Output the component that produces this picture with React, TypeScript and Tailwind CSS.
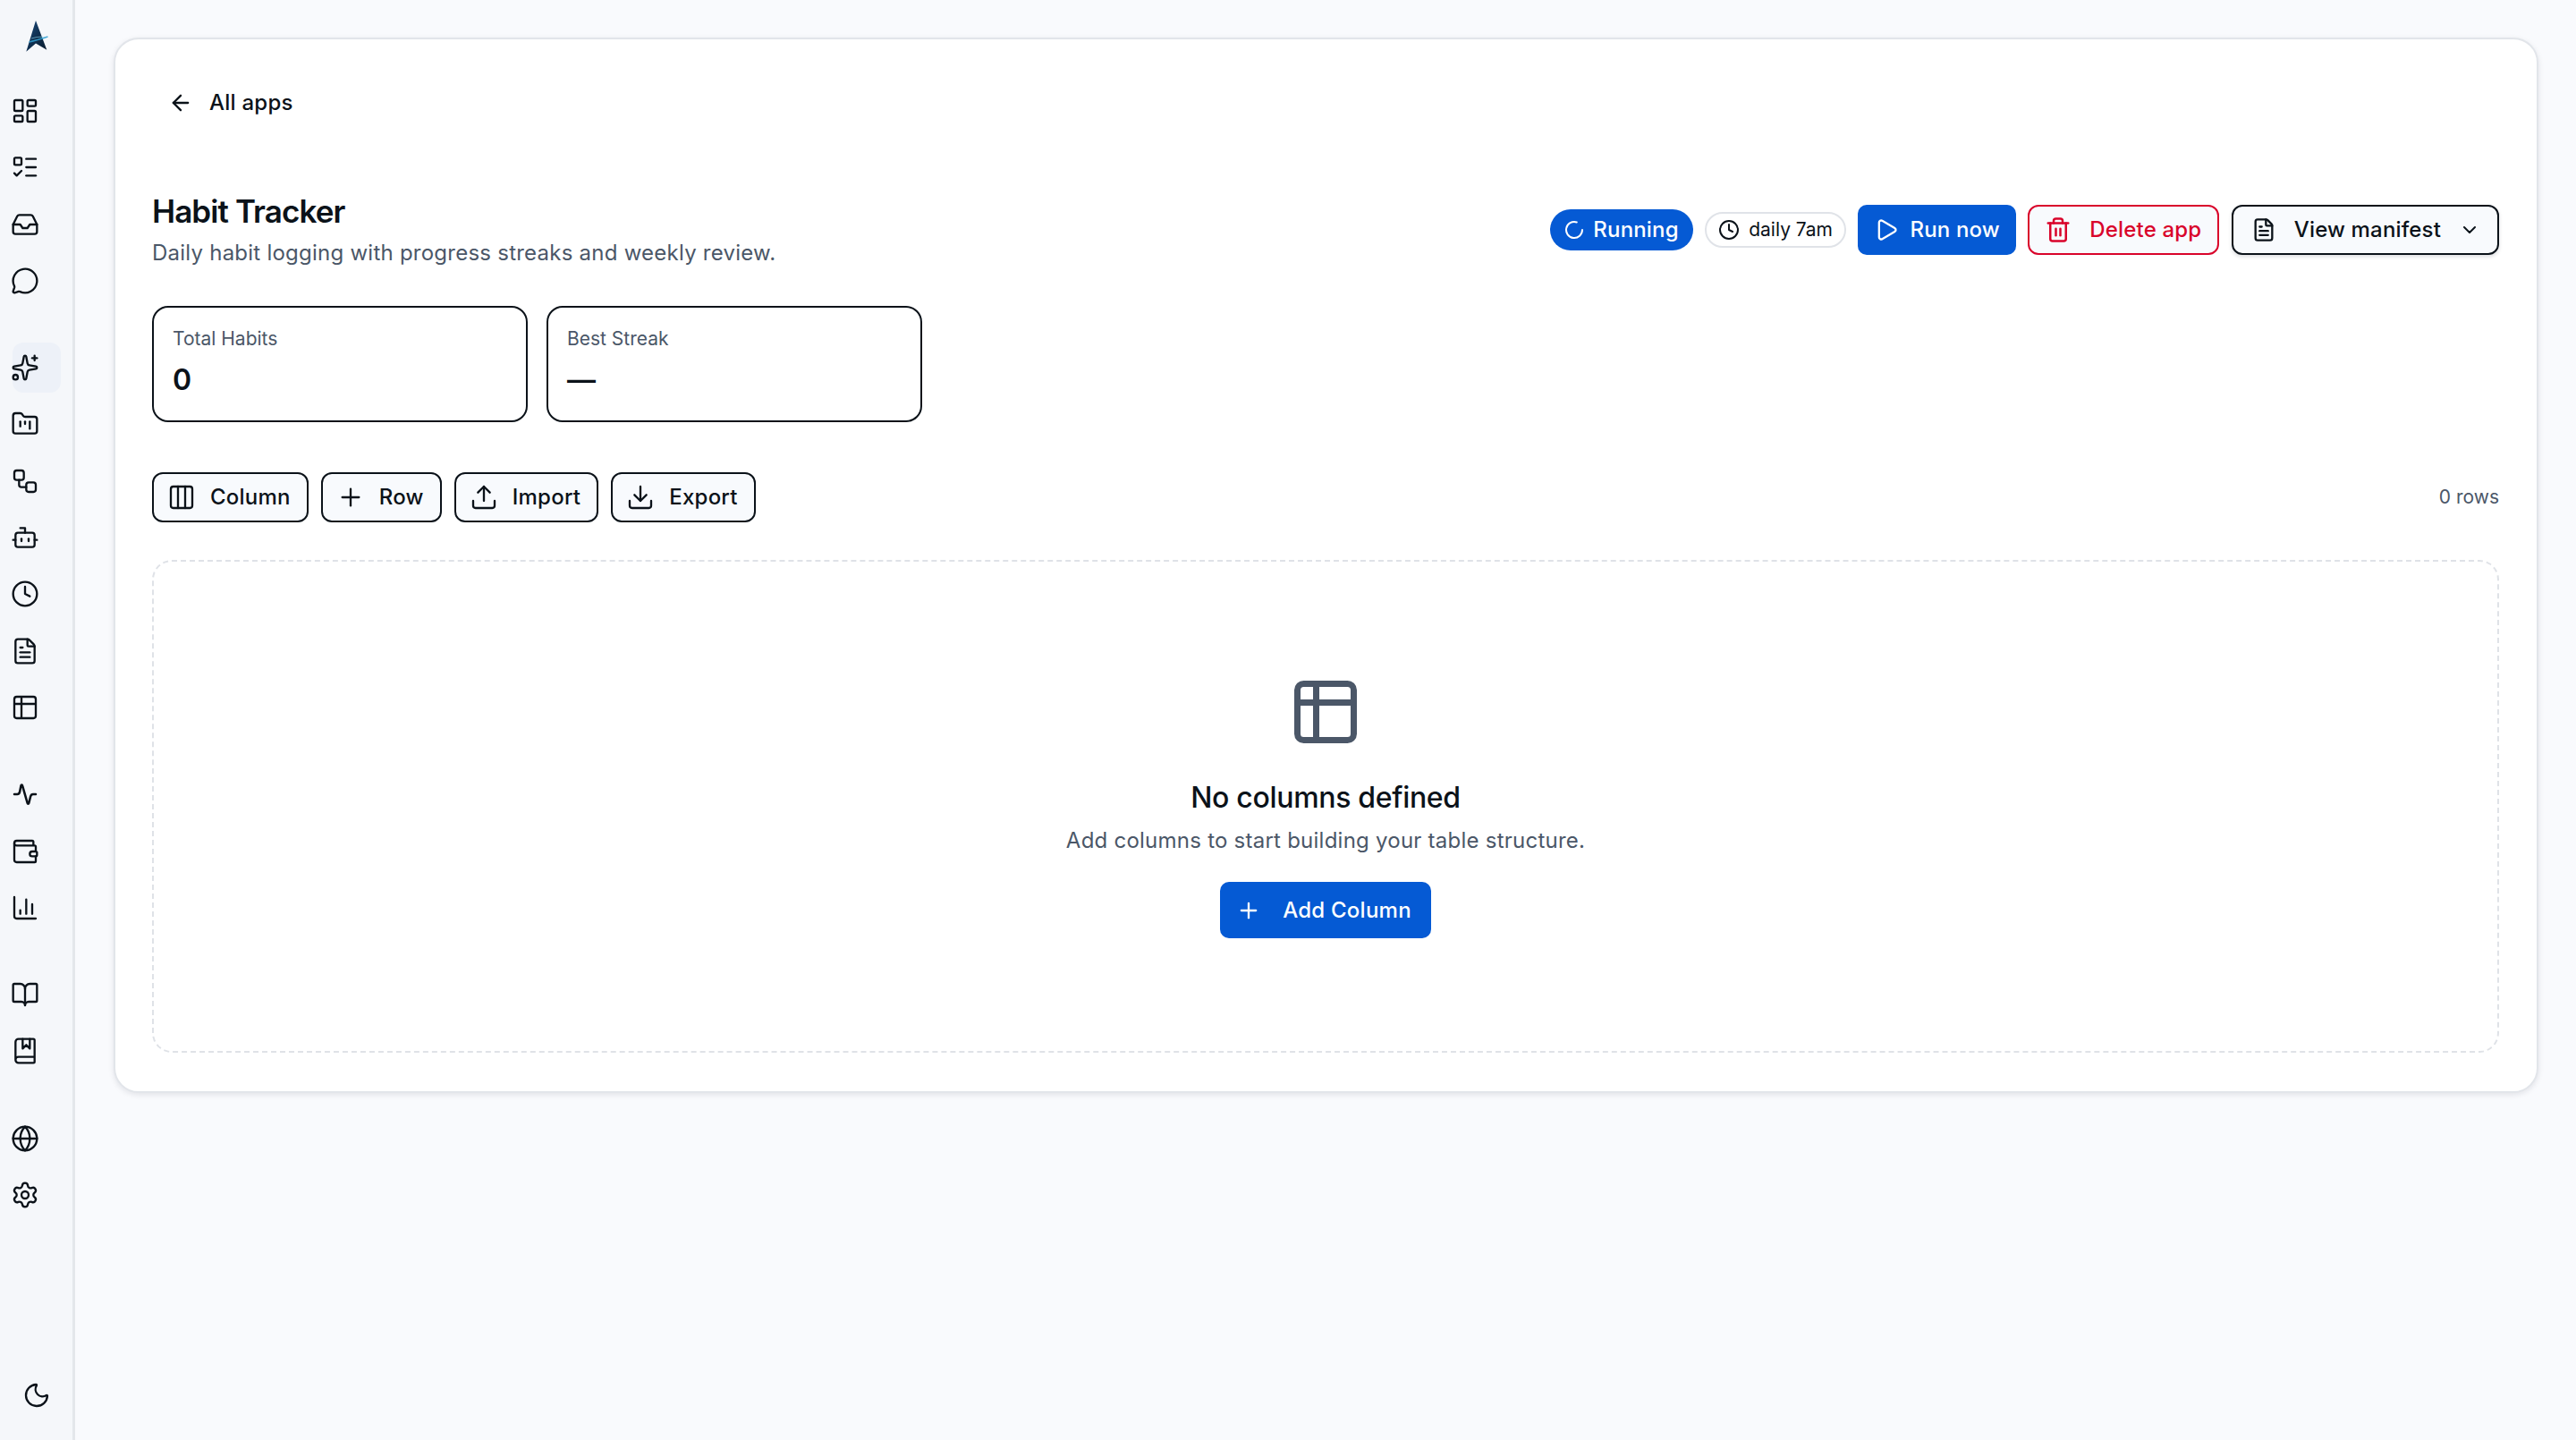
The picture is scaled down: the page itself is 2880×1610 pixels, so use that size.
import React from "react";
import {
  LayoutDashboard, ListTodo, Inbox, MessageCircle, Sparkles, FolderKanban, Workflow, Bot, Clock, FileText, Table2,
  Wallet, ChartColumn, BookOpen, BookMarked, Globe, Settings, Moon, ArrowLeft, LoaderCircle, Play, Trash2, ChevronDown,
  Columns3, Plus, Upload, Download,
} from "lucide-react";

function Pulse({ className }: { className?: string }) {
  return (
    <svg viewBox="0 0 24 24" fill="none" stroke="currentColor" strokeWidth="1.9" strokeLinecap="round" strokeLinejoin="round" className={className}>
      <path d="M3 12h2.5c1 0 1.7-.7 2-1.7L8.6 4.8c.2-.8 1-.8 1.2 0l4.2 14.6c.2.8 1 .8 1.2 0l1.4-5.5c.3-1.1 1-1.9 2.1-1.9H21" />
    </svg>
  );
}

function Logo() {
  return (
    <svg viewBox="0 0 26 36" className="w-[26px] h-[36px]">
      <defs>
        <linearGradient id="lg" x1="0" y1="0" x2="1" y2="1">
          <stop offset="0" stopColor="#1d4f82" />
          <stop offset="0.5" stopColor="#0f2f50" />
          <stop offset="1" stopColor="#0b1c2e" />
        </linearGradient>
      </defs>
      <path d="M12 1 L1.3 35.7 L12 26.5 L24.3 33.7 Z" fill="url(#lg)" />
      <path d="M4.5 25 Q13 23 25.5 19" stroke="#2f9fd0" strokeWidth="1.4" fill="none" opacity="0.85" />
      <path d="M7 21 Q13 19 20 19" stroke="#8ad6ee" strokeWidth="0.9" fill="none" opacity="0.7" />
    </svg>
  );
}

const groups = [
  [LayoutDashboard, ListTodo, Inbox, MessageCircle],
  [Sparkles, FolderKanban, Workflow, Bot, Clock, FileText, Table2],
  [Pulse, Wallet, ChartColumn],
  [BookOpen, BookMarked],
  [Globe, Settings],
];

function Sidebar() {
  return (
    <aside className="w-[84px] shrink-0 h-full flex flex-col bg-[#f5f7fa] border-r-[3px] border-[#e4e7eb] text-[#0b1219]">
      <div className="h-[96px] pt-[22px] flex justify-center">
        <Logo />
      </div>
      <div className="flex flex-col gap-[41.3px]">
        {groups.map((g, i) => (
          <div key={i} className="flex flex-col gap-[7.3px] pl-[14px]">
            {g.map((Icon, j) => {
              const active = Icon === Sparkles;
              return (
                <div key={j} className={`w-[54px] h-[56px] flex items-center rounded-[12px] ${active ? "bg-[#edf1f8]" : ""}`}>
                  <Icon className="w-[32px] h-[32px] -ml-[2px] shrink-0" strokeWidth={1.75} />
                </div>
              );
            })}
          </div>
        ))}
      </div>
      <div className="mt-auto pb-[34px] flex justify-center">
        <Moon className="w-[32px] h-[32px]" strokeWidth={1.75} />
      </div>
    </aside>
  );
}

const toolbarBtn = "h-[56px] flex items-center gap-[16px] pl-[15px] pr-[18px] rounded-[12px] border-2 border-[#0b1219] bg-[#f8fafd] text-[24px] tracking-[0.01em] font-medium text-[#0b1219]";

function Stat({ label, value }: { label: string; value: string }) {
  return (
    <div className="h-[130px] rounded-[18px] border-[2.5px] border-[#0b1219] bg-white px-[21px] pt-[19px]">
      <div className="text-[21px] leading-[32px] text-[#4b5768]">{label}</div>
      <div className="text-[32px] leading-[40px] mt-[10px] font-semibold text-[#0b1219]">{value}</div>
    </div>
  );
}

export default function App() {
  return (
    <div className="w-[2880px] h-[1610px] flex overflow-hidden bg-[#f9fafd] font-['Inter',sans-serif]">
      <Sidebar />
      <main className="flex-1 pl-[43px] pr-[42px] pt-[42px]">
        <div className="h-[1180px] rounded-[28px] border-2 border-[#e2e5ea] bg-white shadow-[0_2px_6px_rgba(15,23,42,0.10)] pl-[41px] pr-[42px] pt-[43px]">
          <div className="h-[56px] flex items-center gap-[18px] pl-[18px] text-[24px] tracking-[0.01em] font-medium text-[#0b1219]">
            <ArrowLeft className="w-[28px] h-[28px]" strokeWidth={2} />
            <span>All apps</span>
          </div>

          <div className="mt-[69px] flex items-center justify-between">
            <div>
              <h1 className="text-[35px] leading-[48px] font-semibold tracking-[-0.026em] text-[#0b1219]">Habit Tracker</h1>
              <p className="text-[24px] leading-[36px] mt-[5px] tracking-[0.01em] text-[#4b5768]">Daily habit logging with progress streaks and weekly review.</p>
            </div>
            <div className="flex items-center gap-[13.5px] h-[56px] tracking-[0.01em]">
              <div className="h-[46px] flex items-center gap-[9px] pl-[15px] pr-[16px] rounded-full bg-[#055ad4] text-white text-[24px] font-medium">
                <LoaderCircle className="w-[24px] h-[24px]" strokeWidth={2} />
                <span>Running</span>
              </div>
              <div className="h-[40px] flex items-center gap-[10px] pl-[13px] pr-[13px] rounded-full border-2 border-[#e0e3e8] bg-white text-[21px] tracking-normal text-[#0b1219]">
                <Clock className="w-[24px] h-[24px]" strokeWidth={2} />
                <span>daily 7am</span>
              </div>
              <div className="h-[56px] flex items-center gap-[12px] pl-[18px] pr-[18px] rounded-[10px] bg-[#055ad4] text-white text-[24px] font-medium">
                <Play className="w-[28px] h-[28px]" strokeWidth={2} />
                <span>Run now</span>
              </div>
              <div className="h-[56px] flex items-center gap-[20px] pl-[17px] pr-[18px] rounded-[12px] border-2 border-[#d9042b] bg-[#f8fafd] text-[#d9042b] text-[24px] font-medium">
                <Trash2 className="w-[30px] h-[30px]" strokeWidth={2} />
                <span>Delete app</span>
              </div>
              <div className="h-[56px] flex items-center gap-[20px] pl-[20px] pr-[19px] rounded-[12px] border-2 border-[#0b1219] bg-[#f8fafd] text-[#0b1219] text-[24px] font-medium shadow-[0_2px_4px_rgba(15,23,42,0.15)]">
                <FileText className="w-[28px] h-[28px]" strokeWidth={2} />
                <span>View manifest</span>
                <ChevronDown className="w-[24px] h-[24px]" strokeWidth={2} />
              </div>
            </div>
          </div>

          <div className="mt-[41px] grid grid-cols-[420px_420px] gap-[21px]">
            <Stat label="Total Habits" value="0" />
            <Stat label="Best Streak" value="—" />
          </div>

          <div className="mt-[56px] flex items-center justify-between">
            <div className="flex items-center gap-[14px]">
              <div className={toolbarBtn}><Columns3 className="w-[32px] h-[32px]" strokeWidth={1.75} /><span>Column</span></div>
              <div className={toolbarBtn}><Plus className="w-[32px] h-[32px]" strokeWidth={1.75} /><span>Row</span></div>
              <div className={toolbarBtn}><Upload className="w-[32px] h-[32px]" strokeWidth={1.75} /><span>Import</span></div>
              <div className={toolbarBtn}><Download className="w-[32px] h-[32px]" strokeWidth={1.75} /><span>Export</span></div>
            </div>
            <span className="text-[21px] text-[#4b5768]">0 rows</span>
          </div>

          <div className="mt-[42px] h-[551px] rounded-[22px] border-2 border-dashed border-[#dfe2e7] flex flex-col items-center justify-center">
            <Table2 className="w-[84px] h-[84px] text-[#4b5768]" strokeWidth={2} />
            <div className="mt-[30px] text-[32px] leading-[48px] tracking-[-0.01em] font-medium text-[#0b1219]">No columns defined</div>
            <div className="mt-[4px] text-[24px] leading-[40px] text-[#4b5768] tracking-[0.01em]">Add columns to start building your table structure.</div>
            <div className="mt-[26px] h-[63px] flex items-center gap-[24px] pl-[18px] pr-[22px] rounded-[10px] bg-[#055ad4] text-white text-[24px] tracking-[0.01em] font-medium">
              <Plus className="w-[28px] h-[28px]" strokeWidth={2} />
              <span>Add Column</span>
            </div>
          </div>
        </div>
      </main>
    </div>
  );
}
